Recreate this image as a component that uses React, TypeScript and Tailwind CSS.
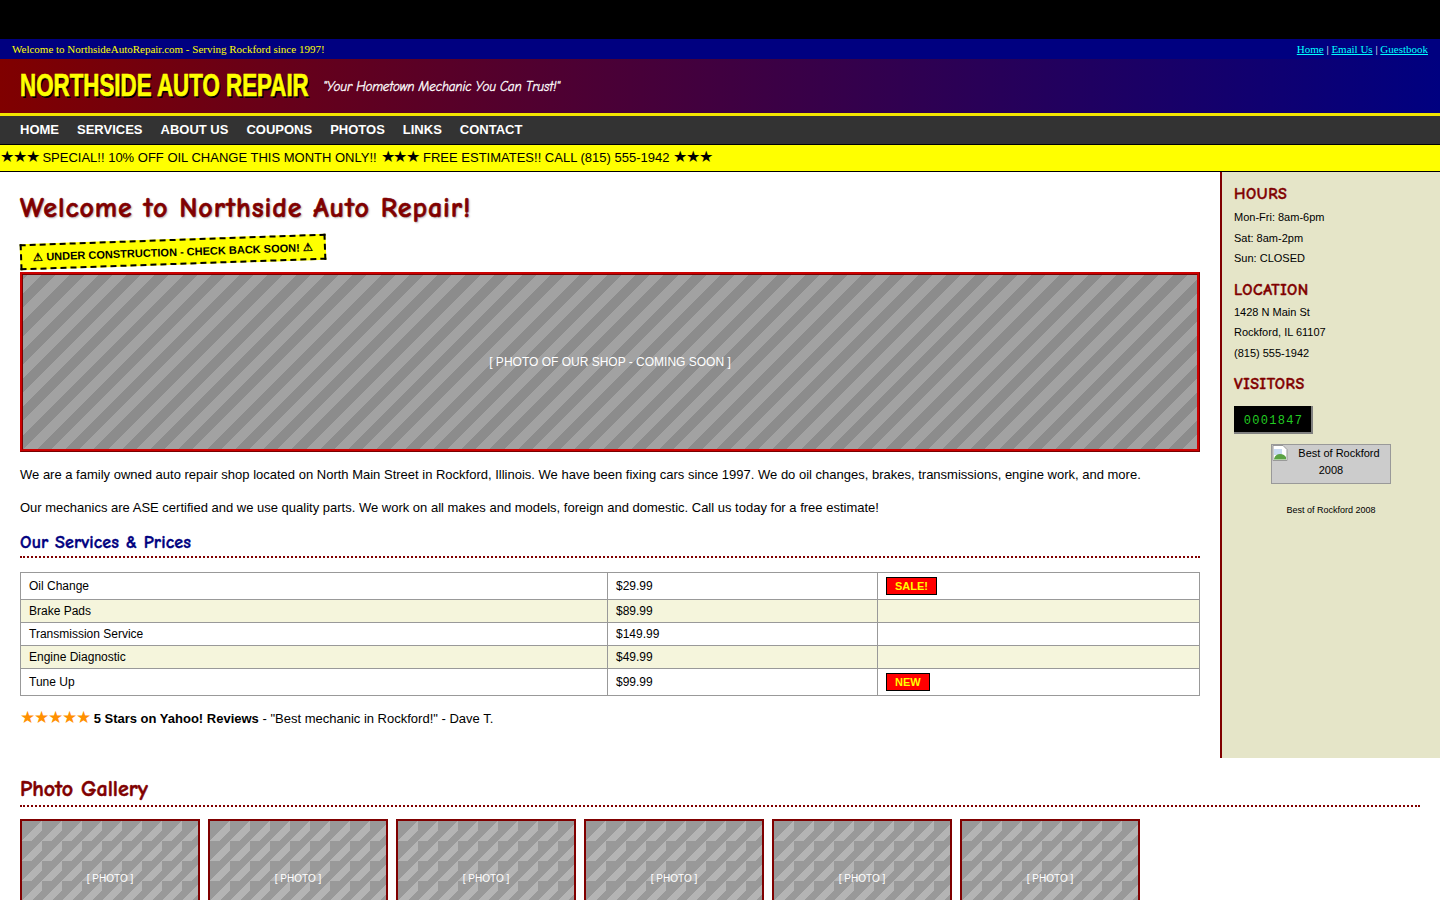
const comic = "font-['Comic_Sans_MS','Comic_Neue','DejaVu_Sans',sans-serif]";

const services = [
  { name: 'Oil Change', price: '$29.99', badge: 'SALE!', tall: true },
  { name: 'Brake Pads', price: '$89.99', shade: true },
  { name: 'Transmission Service', price: '$149.99' },
  { name: 'Engine Diagnostic', price: '$49.99', shade: true },
  { name: 'Tune Up', price: '$99.99', badge: 'NEW', tall: true },
];

const navItems = ['HOME', 'SERVICES', 'ABOUT US', 'COUPONS', 'PHOTOS', 'LINKS', 'CONTACT'];

function SideHeading({ children }: { children: string }) {
  return <h3 className={`${comic} text-[16px] leading-[20px] font-bold tracking-[0.6px] uppercase text-[#800000] [-webkit-text-stroke:0.4px_#800000]`}>{children}</h3>;
}

function Stars() {
  return <span className="mb-[3px] text-[16px] leading-none tracking-[-1.2px]">★★★</span>;
}

export default function App() {
  return (
    <div className="min-h-screen bg-white font-['Liberation_Sans',Arial,sans-serif] text-black">
      <div className="h-[39px] bg-black" />
      <div className="flex h-[20px] items-center justify-between bg-[#000080] px-3 font-['Liberation_Serif',serif] text-[11px]">
        <span className="text-[#ffff00]">Welcome to NorthsideAutoRepair.com - Serving Rockford since 1997!</span>
        <span className="text-white">
          <a className="text-[#00ffff] underline">Home</a> | <a className="text-[#00ffff] underline">Email Us</a> | <a className="text-[#00ffff] underline">Guestbook</a>
        </span>
      </div>
      <header className="flex h-[57px] items-center gap-[14px] border-b-[3px] border-[#f2e600] bg-[linear-gradient(to_right,#800000,#000080)] pl-5">
        <div className="mb-[2px] w-[289px] shrink-0">
          <h1 className="origin-left scale-x-[0.698] text-[32px] leading-none font-bold whitespace-nowrap text-[#ffff00] [-webkit-text-stroke:0.7px_#ffff00] [text-shadow:2px_2px_0_#000]">NORTHSIDE AUTO REPAIR</h1>
        </div>
        <span className={`${comic} mt-[2px] text-[13px] tracking-[-0.13px] text-white italic [-webkit-text-stroke:0.3px_#ffffff]`}>"Your Hometown Mechanic You Can Trust!"</span>
      </header>
      <nav className="flex h-[29px] items-center gap-[18px] border-b border-black bg-[#333333] pl-5 text-[13px] font-bold text-white">
        {navItems.map((item) => (
          <a key={item}>{item}</a>
        ))}
      </nav>
      <div className="flex h-[27px] items-center gap-[4px] border-b border-black bg-[#ffff00] text-[13px] whitespace-nowrap">
        <Stars /> <span>SPECIAL!! 10% OFF OIL CHANGE THIS MONTH ONLY!!</span> <Stars /> <span>FREE ESTIMATES!! CALL (815) 555-1942</span> <Stars />
      </div>

      <div className="flex">
        <main className="w-[1220px] shrink-0 p-5 pb-0">
          <h1 className={`${comic} text-[28px] leading-[32px] font-bold tracking-[0.9px] text-[#800000] [-webkit-text-stroke:0.6px_#800000] [text-shadow:1px_1px_2px_#aaaaaa]`}>Welcome to Northside Auto Repair!</h1>
          <div className="mt-[15px] flex h-[26px] w-[306px] -rotate-2 items-center justify-center border-2 border-dashed border-black bg-[#ffff00] text-[11px] font-bold whitespace-nowrap">
            ⚠ UNDER CONSTRUCTION - CHECK BACK SOON! ⚠
          </div>
          <div className="mt-[7px] flex h-[180px] items-center justify-center border-[3px] border-[#cc0000] bg-[repeating-linear-gradient(-45deg,#a2a2a2,#a2a2a2_10px,#8c8c8c_10px,#8c8c8c_20px)] text-[12px] text-white [border-style:ridge]">
            [ PHOTO OF OUR SHOP - COMING SOON ]
          </div>
          <p className="mt-[13px] text-[13px] leading-[19px]">We are a family owned auto repair shop located on North Main Street in Rockford, Illinois. We have been fixing cars since 1997. We do oil changes, brakes, transmissions, engine work, and more.</p>
          <p className="mt-[14px] text-[13px] leading-[19px]">Our mechanics are ASE certified and we use quality parts. We work on all makes and models, foreign and domestic. Call us today for a free estimate!</p>
          <h2 className={`${comic} mt-[15px] border-b-2 border-dotted border-[#800000] pb-[2px] text-[18px] leading-[22px] font-bold tracking-[0.15px] text-[#000080] [-webkit-text-stroke:0.4px_#000080]`}>Our Services &amp; Prices</h2>
          <table className="mt-[14px] w-full border-collapse border border-[#999999] text-[12px]">
            <tbody>
              {services.map((row) => (
                <tr key={row.name} className={`${row.shade ? 'bg-[#f5f5dc]' : ''} ${row.tall ? 'h-[27px]' : 'h-[23px]'}`}>
                  <td className="w-[587px] border border-[#999999] px-2">{row.name}</td>
                  <td className="w-[270px] border border-[#999999] px-2">{row.price}</td>
                  <td className="border border-[#999999] px-2">
                    {row.badge && (
                      <span className="inline-block border border-black bg-[#ff0000] px-2 text-[11px] leading-[16px] font-bold text-[#ffff00]">{row.badge}</span>
                    )}
                  </td>
                </tr>
              ))}
            </tbody>
          </table>
          <p className="mt-[13px] text-[13px] leading-[19px]">
            <span className="text-[17px] leading-none tracking-[-1px] text-[#ff9000]">★★★★★</span> <strong>5 Stars on Yahoo! Reviews</strong> - "Best mechanic in Rockford!" - Dave T.
          </p>
        </main>
        <aside className="h-[586px] flex-1 border-l-2 border-[#800000] bg-[#e5e5c8] px-3 pt-[12px] text-[11px]">
          <SideHeading>Hours</SideHeading>
          <p className="mt-[3px] leading-[20.5px]">Mon-Fri: 8am-6pm<br />Sat: 8am-2pm<br />Sun: CLOSED</p>
          <div className="mt-[11px]"><SideHeading>Location</SideHeading></div>
          <p className="mt-[2px] leading-[20.5px]">1428 N Main St<br />Rockford, IL 61107<br />(815) 555-1942</p>
          <div className="mt-[11px]"><SideHeading>Visitors</SideHeading></div>
          <div className="mt-[12px] flex h-[28px] w-[79px] items-center justify-center border-r-2 border-b-2 border-[#808080] bg-black pt-[4px] pl-[2px] font-['Liberation_Mono',monospace] text-[12px] tracking-[1.3px] text-[#22cc22]">0001847</div>
          <div className="relative mx-auto mt-[10px] h-[40px] w-[120px] border border-[#999999] bg-[#cccccc] text-center leading-[17px]">
            <svg className="absolute top-0 left-0" width="16" height="16" viewBox="0 0 16 16">
              <path d="M1 .5h10l4 4v11H1z" fill="#fff" stroke="#999" />
              <path d="M2 4h8v6H2z" fill="#c8daf0" />
              <path d="M2 14c1-5 6-6 10-4l2 2v2.500H2z" fill="#5ba344" />
            </svg>
            <span className="pl-[16px]">Best of Rockford</span><br />2008
          </div>
          <p className="mt-[20px] text-center text-[9px]">Best of Rockford 2008</p>
        </aside>
      </div>

      <section className="px-5 pt-[18px]">
        <h2 className={`${comic} border-b-2 border-dotted border-[#800000] pb-[3px] text-[22px] leading-[26px] font-bold text-[#800000] [-webkit-text-stroke:0.5px_#800000]`}>Photo Gallery</h2>
        <div className="mt-3 flex gap-2">
          {[1, 2, 3, 4, 5, 6].map((n) => (
            <div key={n} className="flex h-[120px] w-[180px] items-center justify-center border-2 border-[#800000] bg-[#999999] bg-[linear-gradient(-45deg,transparent_25%,#b4b4b4_25%,#b4b4b4_50%,transparent_50%)] bg-size-[20px_20px] pb-[2px] text-[10px] text-white">
              [ PHOTO ]
            </div>
          ))}
        </div>
      </section>
    </div>
  );
}
